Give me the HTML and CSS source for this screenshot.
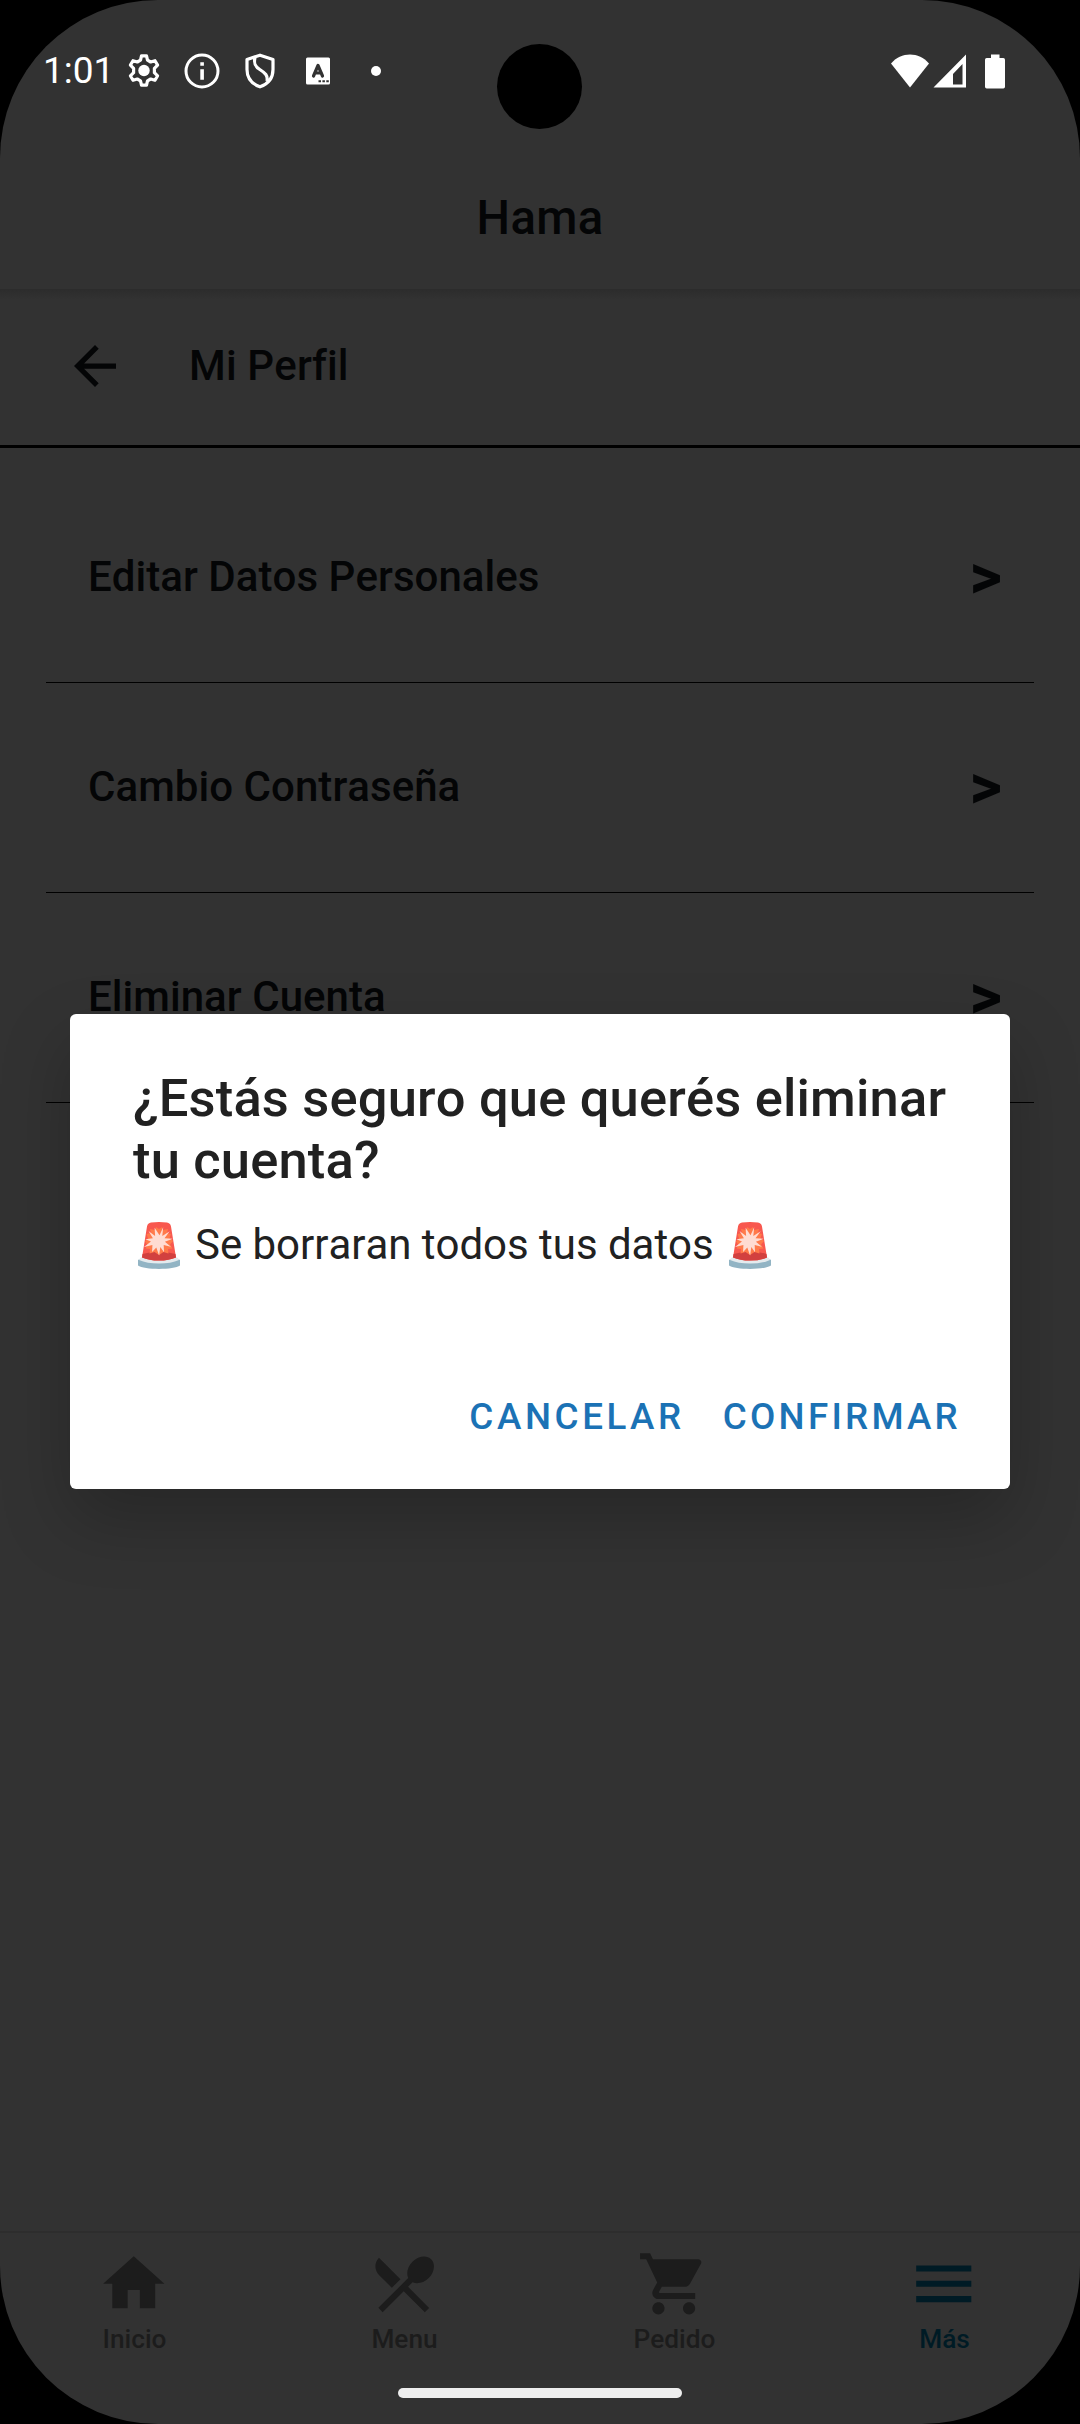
FILE: index.html
```html
<!DOCTYPE html>
<html lang="es">
<head>
<meta charset="utf-8">
<title>Mi Perfil</title>
<link rel="stylesheet" href="styles.css">
</head>
<body>
<div class="screen">
  <header class="status">
    <span class="clock">1:01</span>
    <svg class="status-icon" viewBox="0 0 40 40"><path d="M17.500 4.800h5l1 4.400 3.200 1.800 4.300-1.300 2.600 4.400-3.200 3.200v4.400l3.200 3.100-2.600 4.500-4.300-1.300-3.200 1.800-1 4.400h-5l-1-4.400-3.200-1.800L9 29.300l-2.600-4.500 3.200-3.100v-4.400l-3.200-3.200L9 9.700l4.300 1.300 3.200-1.800z" fill="none" stroke="#fff" stroke-width="3.200" stroke-linejoin="round"/><circle cx="20" cy="19.500" r="5.700" fill="#fff"/></svg>
    <svg class="status-icon" viewBox="0 0 40 40"><circle cx="20" cy="20" r="16" fill="none" stroke="#fff" stroke-width="3"/><path d="M18.300 11.300h3.600v3.500h-3.600zM18.300 18.200h3.600v10.600h-3.600z" fill="#fff"/></svg>
    <svg class="status-icon" viewBox="0 0 40 40"><path d="M20 4.200 33 8.500v10c0 8.500-5 14.500-13 17.300C12 33 7 27 7 18.500v-10zM15 6.500c-1.500 6 0 9 4.800 12 5.500 3.500 8.200 6 7.200 11.500" fill="none" stroke="#fff" stroke-width="3.200" stroke-linejoin="round"/></svg>
    <svg class="status-icon" viewBox="0 0 40 40"><rect x="8" y="6.500" width="24" height="27" rx="1.500" fill="#fff"/><path d="m15.500 25 4.500-10.500L24.500 25M17 22h6" fill="none" stroke="#323232" stroke-width="3.200" stroke-linecap="round" stroke-linejoin="round"/><path d="M20.500 29.200h2.500v2h-2.500zm3.900 0h2.500v2h-2.500zm3.900 0h2.500v2h-2.500z" fill="#323232"/></svg>
    <svg class="status-icon" viewBox="0 0 40 40"><circle cx="20" cy="20" r="5" fill="#fff"/></svg>
    <svg class="system" viewBox="0 0 116 36" fill="#fff"><path d="M1 10.500C11-1.500 29-1.500 39 10.500L20 34.500z"/><path fill-rule="evenodd" d="M76 1.500v33H43.500zM72.500 11 63 21v10.500h9.500z"/><path d="M101 1.500h8.500V5h3.800q1.700 0 1.700 1.700v27q0 1.800-1.700 1.800H96.700q-1.700 0-1.700-1.800v-27Q95 5 96.700 5h4.300z"/></svg>
  </header>
  <div class="camera"></div>
  <div class="app-title">Hama</div>
  <div class="page-head">
    <svg class="back" viewBox="4 4 16 16"><path d="M20 11H7.830l5.590-5.590L12 4l-8 8 8 8 1.410-1.410L7.830 13H20v-2z"/></svg>
    <h1>Mi Perfil</h1>
  </div>
  <main class="list">
    <div class="row"><span>Editar Datos Personales</span><b>&gt;</b></div>
    <div class="row"><span>Cambio Contraseña</span><b>&gt;</b></div>
    <div class="row"><span>Eliminar Cuenta</span><b>&gt;</b></div>
  </main>
  <nav class="tabs">
    <div class="tab"><svg viewBox="0 0 24 24"><path d="M10 20v-6h4v6h5v-8h3L12 3 2 12h3v8z"/></svg><span>Inicio</span></div>
    <div class="tab"><svg viewBox="0 0 24 24"><path d="M8.100 13.340l2.830-2.830L3.910 3.500c-1.560 1.560-1.560 4.090 0 5.660l4.190 4.180zm6.780-1.810c1.530.71 3.680.21 5.270-1.380 1.910-1.910 2.280-4.650.81-6.120-1.460-1.460-4.200-1.100-6.120.81-1.590 1.590-2.090 3.740-1.380 5.270L3.700 19.870l1.410 1.410L12 14.410l6.880 6.880 1.410-1.410L13.410 13l1.470-1.470z"/></svg><span>Menu</span></div>
    <div class="tab"><svg viewBox="0 0 24 24"><path d="M7 18c-1.100 0-1.990.9-1.990 2S5.900 22 7 22s2-.9 2-2-.9-2-2-2zM1 2v2h2l3.600 7.590-1.350 2.450c-.16.28-.25.61-.25.960 0 1.100.9 2 2 2h12v-2H7.420c-.14 0-.25-.11-.25-.25l.03-.12.900-1.630h7.450c.75 0 1.410-.41 1.750-1.030l3.580-6.490c.08-.14.12-.31.12-.48 0-.55-.45-1-1-1H5.210l-.94-2H1zm16 16c-1.100 0-1.990.9-1.990 2s.89 2 1.990 2 2-.9 2-2-.9-2-2-2z"/></svg><span>Pedido</span></div>
    <div class="tab active"><svg viewBox="0 0 24 24"><path d="M3 18h18v-2H3v2zm0-5h18v-2H3v2zm0-7v2h18V6H3z"/></svg><span>Más</span></div>
  </nav>
  <div class="gesture"></div>

  <svg class="defs" width="0" height="0">
    <symbol id="siren" viewBox="0 0 42 47">
      <path d="M0 38c3-3.500 39-3.500 42 0v5.500C36 48 6 48 0 43.500z" fill="#92b4c4"/>
      <path d="M1 38q1-3 4-3h32q3 0 4 3-8 3.500-20 3.500T1 38z" fill="#e4eaed"/>
      <path d="M9 4.500Q9.800 1 13 .6q8-1 16 0 3.200.4 4 3.900L38 35.500Q31 38.600 21 38.600T4 35.500z" fill="#f8584f"/>
      <path d="M4.500 32Q21 27 37.500 32l.5 3.500Q31 38.600 21 38.600T4 35.500z" fill="#d2403f"/>
      <path d="m21 7 3-2 1 3 5-1-1 4 4 1-1.500 4 3.500 3-3 3.500 2.500 4-4.500.5.500 4.500-5-1.500-4.500 3-4.500-3-5 1.500.5-4.500-4.500-.5L9.500 23 7 19.500l3-3L8.500 12l4.500-1-1-4 5 1 1-3z" fill="#ff7a4a"/>
      <path d="m21.500 13.200 3.700-8-.9 8.900 7.400-4.800-5.200 7 8.300.5-7.900 3 6 5-7.200-1.700.3 7.200-3.700-5.400-1.200 8.700-2.800-8-4.200 4.500.3-7-8.400 2 7-5.500-5.700-2.300 7.600-1-4.400-7.200 6.600 5-.5-8.400z" fill="#ffdcd2"/>
    </symbol>
  </svg>
  <section class="dialog" role="alertdialog">
    <h2>¿Estás seguro que querés eliminar tu cuenta?</h2>
    <p><svg class="siren"><use href="#siren"/></svg><span>Se borraran todos tus datos</span><svg class="siren"><use href="#siren"/></svg></p>
    <div class="actions"><button class="cancel">CANCELAR</button><button>CONFIRMAR</button></div>
  </section>
</div>
</body>
</html>
```
FILE: styles.css
```css
* { box-sizing: border-box; }
body { margin: 0; background: #000; font-family: Roboto, sans-serif; }
.screen {
  position: relative;
  display: flex;
  flex-direction: column;
  width: 1080px;
  height: 2424px;
  overflow: hidden;
  background: #323232;
  border-radius: 158px;
  color: #040506;
  font-kerning: none;
}
.status {
  display: flex;
  align-items: center;
  height: 142px;
  padding: 0 74px 0 43px;
  color: #fff;
}
.clock { width: 81px; font-size: 37px; line-height: 44px; }
.status-icon { width: 40px; height: 40px; margin-right: 18px; }
.system { width: 116px; height: 36px; margin-left: auto; }
.camera {
  position: absolute;
  left: 497px;
  top: 44px;
  width: 85px;
  height: 85px;
  border-radius: 50%;
  background: #000;
}
.app-title {
  display: flex;
  align-items: center;
  justify-content: center;
  height: 147px;
  padding-top: 4px;
  font-size: 47.25px;
  font-weight: 500;
  letter-spacing: .3px;
}
.page-head {
  display: flex;
  align-items: center;
  height: 159px;
  padding: 0 0 2px 74px;
  border-bottom: 3px solid #000;
  background: linear-gradient(#2c2c2c, #323232 11px);
}
.back { width: 42px; height: 42px; fill: #040506; }
.page-head h1 {
  margin: 0 0 0 73px;
  padding-bottom: 2px;
  font-size: 42px;
  font-weight: 500;
  letter-spacing: .15px;
}
.list { flex: 1; padding: 25px 46px 0; }
.row {
  display: flex;
  align-items: center;
  justify-content: space-between;
  height: 210px;
  padding: 0 32px 3px 42px;
  border-bottom: 1px solid #000;
  font-size: 42px;
  font-weight: 500;
  letter-spacing: .05px;
}
.row b { font-size: 63px; font-weight: 700; }
.tabs {
  display: flex;
  height: 193px;
  border-top: 2px solid #2d2d2d;
}
.tab {
  display: flex;
  flex: 1;
  flex-direction: column;
  align-items: center;
  padding: 14px 1px 0 0;
  color: #1c1c1c;
  font-size: 26.25px;
  font-weight: 500;
  line-height: 31px;
}
.tab svg { width: 73.5px; height: 73.5px; margin-right: 1px; fill: currentColor; }
.tab span { margin-top: 3px; }
.tab.active { color: #001b25; }
.gesture {
  position: absolute;
  left: 398px;
  top: 2388px;
  width: 284px;
  height: 10px;
  border-radius: 5px;
  background: #eee;
}
.defs { position: absolute; }
.dialog {
  position: absolute;
  left: 70px;
  top: 1014px;
  display: flex;
  flex-direction: column;
  width: 940px;
  height: 475px;
  padding: 53px 46px 41px 63px;
  border-radius: 6px;
  background: #fff;
  box-shadow: 0 30px 70px rgba(0, 0, 0, .22);
  color: #212121;
}
.dialog h2 {
  margin: 0;
  font-size: 52.5px;
  font-weight: 500;
  line-height: 62px;
  letter-spacing: .17px;
}
.dialog p {
  display: flex;
  align-items: center;
  margin: 29px 0 0;
  padding-left: 5px;
  font-size: 42px;
  line-height: 50px;
  letter-spacing: -.03px;
}
.siren { width: 42px; height: 47px; }
.dialog p span { margin: 0 15px; }
.actions {
  display: flex;
  justify-content: flex-end;
  gap: 38px;
  margin-top: auto;
  padding-right: 3px;
}
.actions button {
  padding: 0;
  border: 0;
  background: none;
  color: #1b72b5;
  font: 500 36.75px/62px Roboto, sans-serif;
  font-kerning: none;
  letter-spacing: 3.28px;
}
.actions .cancel { letter-spacing: 3.6px; }
```
